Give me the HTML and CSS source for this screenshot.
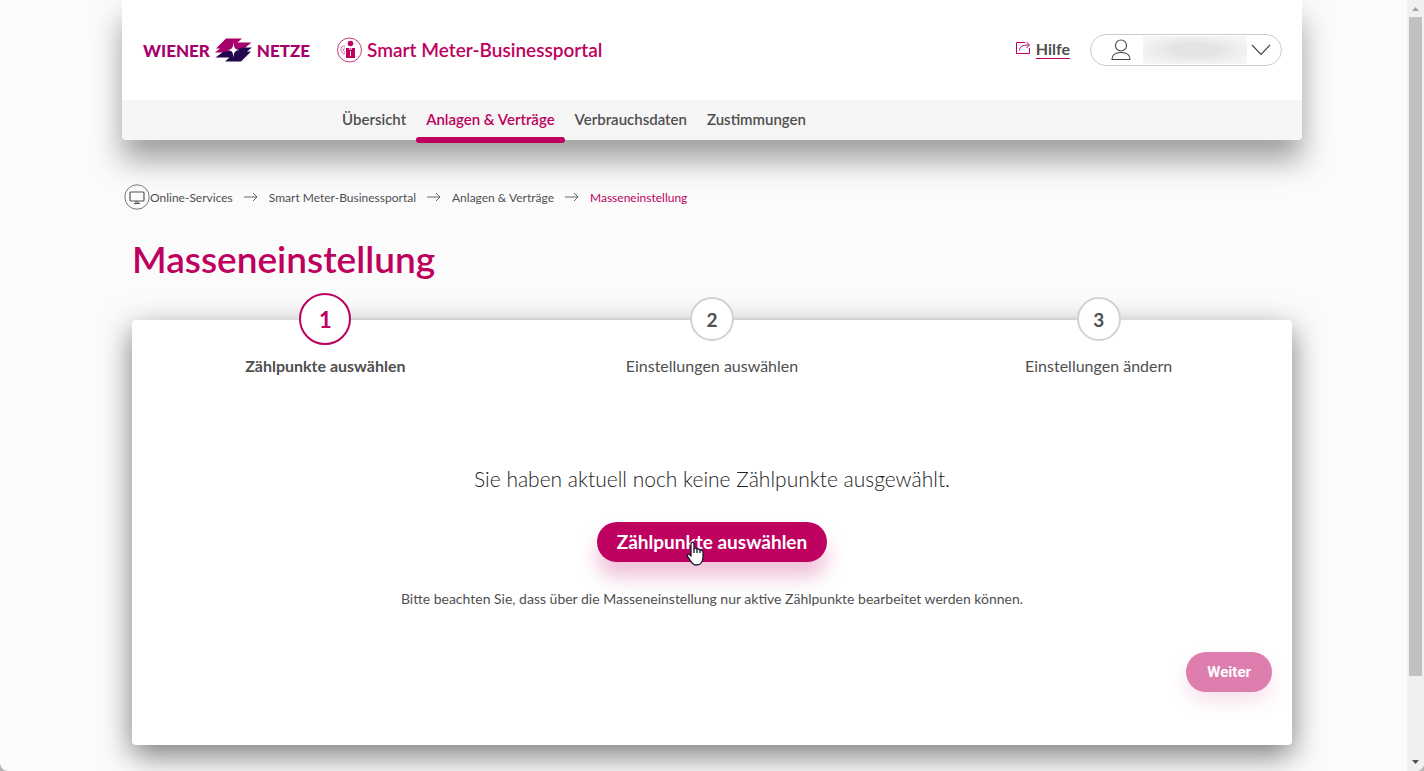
FILE: index.html
```
<!DOCTYPE html>
<html lang="de">
<head>
  <meta charset="UTF-8" />
  <meta name="viewport" content="width=device-width, initial-scale=1.0"/>
  <title>Masseneinstellung - Smart Meter-Businessportal</title>
  <link rel="stylesheet" href="styles.css">
</head>
<body>
  <header class="header">
    <div class="topbar">
      <a class="logo" href="#" aria-label="Wiener Netze">
        <span>WIENER</span>
        <svg width="37" height="24" viewBox="0 0 37 24" aria-hidden="true">
          <path fill="#a6006b" d="M11 0.500H27L22.500 4.500H36.500L28 11.500H19L10 14.500H0L5 10.500H1Z"/>
          <path fill="#24064f" d="M26 23.500H10L14.500 19.500H0.500L8 14L19 12L28 9.500H37L32 13.500H36Z"/>
          <path fill="#fff" d="M18.500 3.500C18.800 10 20 11.500 24.500 12C20 12.500 18.800 14 18.500 20.500C18.200 14 17 12.500 12.500 12C17 11.500 18.200 10 18.500 3.500Z"/>
        </svg>
        <span>NETZE</span>
      </a>
      <a class="portal" href="#">
        <svg width="25" height="26" viewBox="0 0 25 26" fill="none" stroke="#be005e" aria-hidden="true">
          <circle cx="12.500" cy="13" r="12" stroke-width="0.800"/>
          <circle cx="13.500" cy="6.500" r="2.800" fill="#be005e" stroke="none"/>
          <path d="M9 11H18V21H9Z" fill="#be005e" stroke="none"/>
          <path d="M12 10.500L13.500 13L15 10.500M13.500 14V19" stroke="#fff" stroke-width="0.900"/>
          <path d="M8 9C5 8 4 11 4 13S6 17 8 17M8 11C6 11 6 15 8 15" stroke-width="0.600"/>
        </svg>
        <span>Smart Meter-Businessportal</span>
      </a>
      <a class="help" href="#">
        <svg width="16" height="14" viewBox="0 0 16 14" fill="none" stroke="#be005e" aria-hidden="true">
          <path d="M10 1.500H1.500V12.500H14.500V7"/>
          <path d="M4.500 9.500C4.500 6 7 4 14 4M11.500 1L14.500 4L11.500 7"/>
        </svg>
        <span>Hilfe</span>
      </a>
      <button class="account" type="button" aria-label="Benutzerkonto">
        <svg width="20" height="22" viewBox="0 0 20 22" fill="none" stroke="#444" stroke-width="1.100" aria-hidden="true">
          <circle cx="10" cy="6.500" r="5.500"/>
          <path d="M1 20.500C1 15 5 13.500 10 13.500S19 15 19 20.500Z"/>
        </svg>
        <span class="account-name"></span>
        <svg width="20" height="12" viewBox="0 0 20 12" fill="none" stroke="#444" stroke-width="1.100" aria-hidden="true">
          <path d="M1 1L10 10.500L19 1"/>
        </svg>
      </button>
    </div>
    <nav class="nav">
      <a href="#">Übersicht</a>
      <a class="active" href="#">Anlagen &amp; Verträge</a>
      <a href="#">Verbrauchsdaten</a>
      <a href="#">Zustimmungen</a>
    </nav>
  </header>

  <nav class="breadcrumb" aria-label="Breadcrumb">
    <a class="home" href="#">
      <svg width="26" height="26" viewBox="0 0 26 26" fill="none" stroke="#555" aria-hidden="true">
        <circle cx="13" cy="13" r="12.200" stroke-width="0.800"/>
        <rect x="6" y="8" width="14" height="9" rx="1" stroke-width="1.200"/>
        <path d="M12 17V19M14 17V19M10 19.500H16"/>
      </svg>
      <span>Online-Services</span>
    </a>
    <svg width="14" height="10" viewBox="0 0 14 10" fill="none" stroke="#555" stroke-width="0.900" aria-hidden="true"><path d="M0 5H13M9 1L13 5L9 9"/></svg>
    <a href="#">Smart Meter-Businessportal</a>
    <svg width="14" height="10" viewBox="0 0 14 10" fill="none" stroke="#555" stroke-width="0.900" aria-hidden="true"><path d="M0 5H13M9 1L13 5L9 9"/></svg>
    <a href="#">Anlagen &amp; Verträge</a>
    <svg width="14" height="10" viewBox="0 0 14 10" fill="none" stroke="#555" stroke-width="0.900" aria-hidden="true"><path d="M0 5H13M9 1L13 5L9 9"/></svg>
    <a class="current" href="#">Masseneinstellung</a>
  </nav>

  <main class="content">
    <h1>Masseneinstellung</h1>

    <section class="card">
      <ol class="steps">
        <li class="step active"><span class="number">1</span><span class="step-label">Zählpunkte auswählen</span></li>
        <li class="step"><span class="number">2</span><span class="step-label">Einstellungen auswählen</span></li>
        <li class="step"><span class="number">3</span><span class="step-label">Einstellungen ändern</span></li>
      </ol>

      <div class="empty">
        <p class="message">Sie haben aktuell noch keine Zählpunkte ausgewählt.</p>
        <button class="btn" type="button">Zählpunkte auswählen
          <svg class="cursor" width="18" height="25" viewBox="0 0 18 25" fill="#fff" stroke="#16162a" stroke-width="1.300" stroke-linejoin="round" aria-hidden="true">
            <path d="M5 15V3C5 0.500 8 0.500 8 3V8C8.500 6.500 11 7 11 8.500C12 7.500 14 8 14 9.500C15 8.500 17 9.500 17 11V16C17 20 15 24 10 24C7 24 6 22 4 19L1.500 15.500C0.500 13.500 2.500 12.500 3.500 13.500Z"/>
            <path d="M8 8V12M11 9V12M14 10V12"/>
          </svg>
        </button>
        <p class="hint">Bitte beachten Sie, dass über die Masseneinstellung nur aktive Zählpunkte bearbeitet werden können.</p>
      </div>

      <div class="actions">
        <button class="btn next" type="button" disabled>Weiter</button>
      </div>
    </section>
  </main>

  <!-- window scrollbar -->
  <div class="scrollbar" aria-hidden="true">
    <svg width="17" height="17" viewBox="0 0 17 17" fill="#a3a3a3"><path d="M5 11L8.500 7L12 11Z"/></svg>
    <div class="thumb"></div>
    <svg width="17" height="17" viewBox="0 0 17 17" fill="#505050"><path d="M5 6L8.500 10L12 6Z"/></svg>
  </div>
</body>
</html>
```
FILE: styles.css
```
* {
  box-sizing: border-box;
  margin: 0;
  padding: 0;
}

html {
  background: #b4b4b4;
}

body {
  font-family: Lato, "Liberation Sans", sans-serif;
  background: #fbfbfb;
  color: #4f4f4f;
  height: 100vh;
  overflow: hidden;
  border-radius: 0 0 8px 8px;
}

a {
  color: inherit;
  text-decoration: none;
}

.header {
  max-width: 1180px;
  margin: 0 auto;
  background: #fff;
  border-radius: 0 0 4px 4px;
  box-shadow: 0 20px 30px rgba(0, 0, 0, 0.37);
}

.topbar {
  display: flex;
  align-items: center;
  height: 100px;
  padding: 0 20px 0 21px;
}

.logo {
  display: flex;
  align-items: center;
  gap: 5px;
  color: #a6006b;
  font-size: 17px;
  font-weight: 900;
}

.portal {
  display: flex;
  align-items: center;
  gap: 5px;
  margin-left: 27px;
  color: #be005e;
  font-size: 19px;
  font-weight: 600;
  line-height: 20px;
}

.help {
  display: flex;
  align-items: center;
  gap: 5px;
  margin-left: auto;
  font-size: 16px;
  font-weight: 700;
  line-height: 18px;
}

.help svg {
  margin-bottom: 4px;
}

.help span {
  margin-bottom: 2px;
  border-bottom: 1px solid #be005e;
}

.account {
  display: flex;
  align-items: center;
  width: 192px;
  height: 32px;
  margin-left: 20px;
  padding: 0 10px 0 20px;
  gap: 4px;
  border: 1px solid #ccc;
  border-radius: 16px;
  background: #fff;
}

/* blurred user name */
.account-name {
  flex: 1;
  height: 28px;
  margin-left: 8px;
  background: radial-gradient(ellipse, #e4e4e4 30%, #f5f5f5 80%);
}

.nav {
  display: flex;
  height: 40px;
  padding-left: 210px;
  background: #f5f5f5;
  border-radius: 0 0 4px 4px;
  font-size: 15px;
  font-weight: 600;
  line-height: 38px;
}

.nav a {
  height: 43px;
  padding: 0 10px;
}

.nav .active {
  color: #be005e;
  position: relative;
}

.nav .active::after {
  content: "";
  position: absolute;
  left: 0;
  right: 0;
  bottom: 0;
  height: 6px;
  border-radius: 3px;
  background: #be005e;
}

.breadcrumb {
  display: flex;
  align-items: center;
  gap: 11px;
  max-width: 1180px;
  height: 26px;
  margin: 44px auto 0;
  padding-left: 2px;
  font-size: 12px;
}

.home {
  display: flex;
  align-items: center;
}

.breadcrumb .current {
  color: #be005e;
}

.content {
  max-width: 1160px;
  margin: 0 auto;
}

h1 {
  margin: 25px 0 37px;
  color: #be005e;
  font-size: 37px;
  font-weight: 600;
  line-height: 48px;
}

.card {
  display: flow-root;
  background: #fff;
  border-radius: 4px;
  padding-bottom: 53px;
  box-shadow: 0 10px 30px rgba(0, 0, 0, 0.52);
}

.steps {
  display: grid;
  grid-template-columns: repeat(3, 1fr);
  list-style: none;
  margin-top: -27px;
}

.step {
  position: relative;
  display: flex;
  flex-direction: column;
  align-items: center;
  font-size: 16px;
}

/* line between two steps */
.step + .step::before {
  content: "";
  position: absolute;
  top: 25px;
  right: 50%;
  width: 100%;
  height: 2px;
  background: #d2d2d2;
}

.number {
  position: relative;
  z-index: 1;
  width: 44px;
  height: 44px;
  margin: 4px 0;
  border: 2px solid #d2d2d2;
  border-radius: 50%;
  background: #fff;
  font-size: 19px;
  font-weight: 700;
  line-height: 41px;
  text-align: center;
}

.step.active .number {
  z-index: 2;
  width: 52px;
  height: 52px;
  margin: 0;
  border-color: #be005e;
  color: #be005e;
  font-size: 22px;
  line-height: 49px;
}

.step-label {
  margin-top: 11px;
  line-height: 20px;
}

.step.active .step-label {
  font-weight: 700;
}

.empty {
  display: flex;
  flex-direction: column;
  align-items: center;
  margin-top: 89px;
  text-align: center;
}

.message {
  font-size: 21px;
  font-weight: 300;
  line-height: 28px;
  color: #222;
}

.btn {
  position: relative;
  height: 40px;
  padding: 0 20px 2px;
  border: none;
  border-radius: 20px;
  background: #be005e;
  color: #fff;
  font-family: inherit;
  font-size: 19px;
  font-weight: 700;
  cursor: pointer;
  box-shadow: 0 15px 20px rgba(190, 0, 94, 0.25);
}

.empty .btn {
  margin: 29px 0 27px;
}

.cursor {
  position: absolute;
  top: 19px;
  left: 89px;
}

.hint {
  font-size: 14px;
  line-height: 20px;
}

.actions {
  display: flex;
  justify-content: flex-end;
  margin-top: 43px;
  padding-right: 20px;
}

.btn.next {
  padding: 0 21px;
  background: #dd7eae;
  font-family: Roboto, sans-serif;
  font-size: 15px;
  box-shadow: 0 10px 20px rgba(190, 0, 94, 0.12);
}

.scrollbar {
  position: fixed;
  top: 0;
  right: 0;
  bottom: 0;
  display: flex;
  flex-direction: column;
  justify-content: space-between;
  width: 17px;
  background: #f0f0f0;
  border-radius: 0 0 8px 0;
}

.thumb {
  flex: 0 0 85.5%;
  width: 13px;
  margin: 0 2px auto;
  background: #c1c1c1;
}
```
